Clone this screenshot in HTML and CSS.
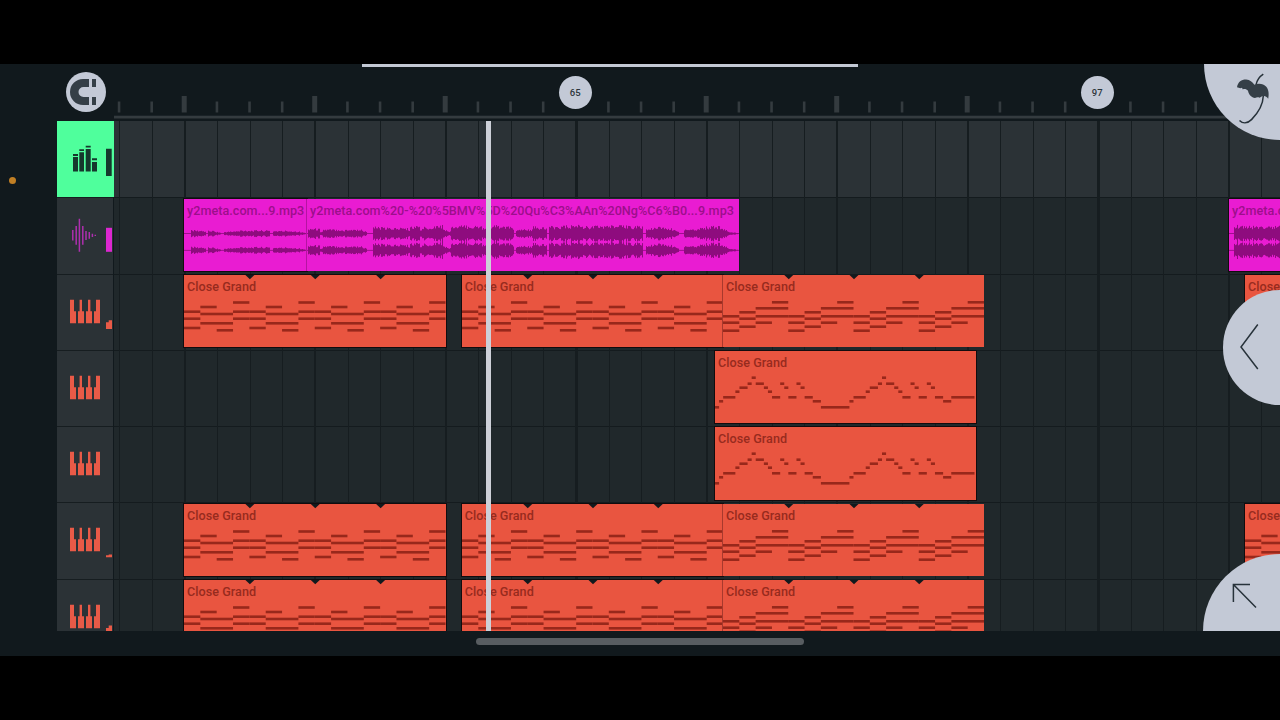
FILE: index.html
```html
<!DOCTYPE html>
<html lang="en">
<head>
    <meta charset="UTF-8">
    <meta name="viewport" content="width=device-width, initial-scale=1.0">
    <title>Playlist</title>
    <link rel="stylesheet" href="styles.css">
</head>
<body>
    <!-- Shared icons -->
    <svg class="defs" width="0" height="0">
        <symbol id="piano" viewBox="0 0 30 24">
            <path d="M0 0H4V11.7H6V24H0ZM9.6 0H12V11.7H14V24H8V11.7H9.6ZM18 0H20.4V11.7H22V24H16V11.7H18ZM26 0H30V24H24V11.7H26Z"/>
        </symbol>
    </svg>

    <div class="app">
        <header class="toolbar">
            <div class="loop-bar"></div>
            <div class="magnet">
                <svg width="40" height="40" viewBox="0 0 40 40">
                    <path d="M23 7H17A13 13 0 0 0 17 33H23V25H17.5A5 5 0 0 1 17.5 15H23ZM26 7H30V15H26ZM26 25H30V33H26Z"/>
                </svg>
            </div>
            <div class="ruler">
                <svg id="ticks" width="1166" height="57"></svg>
                <span class="marker marker-65">65</span>
                <span class="marker marker-97">97</span>
            </div>
        </header>

        <main class="playlist">
            <aside class="gutter"><span class="dot"></span></aside>

            <!-- Track headers -->
            <div class="tracks">
                <div class="track master">
                    <svg width="57" height="76">
                        <path d="M16 36H21V50.5H16ZM16 33H21V35H16ZM22.3 31.3H27V50.5H22.3ZM22.3 28.3H27V30H22.3ZM28.7 28H33.7V50.5H28.7ZM28.7 24.8H33.7V26.6H28.7ZM35 41H40V50.5H35ZM35 37.3H40V39.2H35ZM49 27.8H54.7V55H49Z"/>
                    </svg>
                </div>
                <div class="track audio">
                    <svg width="57" height="76">
                        <path class="wave-icon" d="M15.8 33V43.5M19.2 29V47.8M22.4 21.8V54.8M25.8 29V47.8M29 34V43M32.3 35V41.8M35.4 36.7V40M38.3 37.7V39"/>
                        <rect class="meter" x="49" y="30.8" width="6" height="24"/>
                    </svg>
                </div>
                <div class="track keys">
                    <svg width="57" height="76">
                        <use href="#piano" x="13" y="25.5" width="30" height="24"/>
                        <path class="meter" d="M49 48.3H51.7V46.2H55V55H49Z"/>
                    </svg>
                </div>
                <div class="track keys">
                    <svg width="57" height="76"><use href="#piano" x="13" y="25.5" width="30" height="24"/></svg>
                </div>
                <div class="track keys">
                    <svg width="57" height="76"><use href="#piano" x="13" y="25.5" width="30" height="24"/></svg>
                </div>
                <div class="track keys">
                    <svg width="57" height="76">
                        <use href="#piano" x="13" y="25.5" width="30" height="24"/>
                        <path class="meter" d="M49 53.2H51.7V52.4H55V55.2H49Z"/>
                    </svg>
                </div>
                <div class="track keys">
                    <svg width="57" height="76">
                        <use href="#piano" x="13" y="25.5" width="30" height="24"/>
                        <path class="meter" d="M49 49H51.7V46.5H55V55.2H49Z"/>
                    </svg>
                </div>
            </div>

            <!-- Lanes are filled by script.js -->
            <div class="timeline" id="timeline">
                <svg id="grid" class="grid" width="1166" height="510"></svg>
                <div class="playhead"></div>
            </div>
        </main>

        <footer class="scroll"><div class="thumb"></div></footer>

        <!-- Corner buttons -->
        <div class="corner menu">
            <svg width="76" height="76">
                <path class="stem" d="M59.3 10.2C55 13 52.8 16.5 52 21M59.3 32C59 40 54 49 47.5 55.6C43 60 38.5 59.5 35.5 56.5"/>
                <path class="palm" d="M33 23.3C34 17.5 38 15.4 42.2 15.6C46 15.8 48.3 18.3 50.4 20.8C54.5 18.8 59.5 19.6 62.3 22.8C65 26 65 31 64.2 34.8C62.8 32.8 61.2 31.8 59.6 32C58 31.6 56.8 33 55.6 33.8C54 33 52.6 33.2 51 34C47.6 33.6 44.8 31 44 26.8C42.6 25.2 40.6 24.6 38.8 25.4L38 23.8L36.4 24.2Z"/>
            </svg>
        </div>
        <div class="corner back">
            <svg width="58" height="115"><path d="M34.8 34.5L18 57L34.8 79"/></svg>
        </div>
        <div class="corner expand">
            <svg width="77" height="77"><path d="M47 30.5H30.4V48M30.4 30.5L53 53.5"/></svg>
        </div>
    </div>

    <script src="script.js"></script>
</body>
</html>
```
FILE: styles.css
```css
body {
    margin: 0;
    background-color: #000;
    font-family: Roboto, sans-serif;
    overflow: hidden;
}
.defs {
    position: absolute;
}
svg {
    display: block;
}
.app {
    position: relative;
    display: flex;
    flex-direction: column;
    width: 1280px;
    height: 592px;
    margin: 64px 0;
    background-color: #11191d;
    overflow: hidden;
}

/* Toolbar */
.toolbar {
    position: relative;
    display: flex;
    height: 57px;
}
.loop-bar {
    position: absolute;
    left: 362px;
    top: 0;
    width: 496px;
    height: 2.5px;
    background-color: #c3c9d4;
}
.magnet {
    width: 40px;
    height: 40px;
    margin: 8px 8.5px 0 65.5px;
    border-radius: 50%;
    background-color: #c3c9d6;
    fill: #353f47;
}
.ruler {
    position: relative;
    flex: 1;
}
#ticks {
    fill: #343b3f;
}
.marker {
    position: absolute;
    top: 11.5px;
    width: 33.5px;
    height: 33.5px;
    border-radius: 50%;
    background-color: #c3c9d6;
    color: #2b343a;
    font-size: 9.5px;
    font-weight: 500;
    line-height: 33px;
    text-align: center;
}
.marker-65 {
    left: 444.5px;
}
.marker-97 {
    left: 966.5px;
}

/* Playlist */
.playlist {
    display: flex;
    height: 510px;
    overflow: hidden;
}
.gutter {
    width: 57px;
}
.dot {
    display: block;
    width: 7px;
    height: 7px;
    margin: 56px 0 0 9px;
    border-radius: 50%;
    background-color: #c17f24;
}
.tracks {
    width: 57px;
}
.track {
    box-sizing: border-box;
    width: 56px;
    height: 76.25px;
    background-color: #2b3236;
    border-top: 1px solid #161d20;
    overflow: hidden;
}
.track svg {
    margin-top: -1px;
}
.master {
    width: 56.5px;
    border-top: none;
    background-color: #4fff9c;
    fill: #16382d;
}
.master svg {
    margin-top: 0;
}
.audio {
    fill: #dc27d0;
}
.wave-icon {
    fill: none;
    stroke: #ae2fae;
    stroke-width: 1.5;
}
.keys {
    fill: #e95a47;
}
.timeline {
    position: relative;
    flex: 1;
    overflow: hidden;
}
.lane {
    position: relative;
    box-sizing: border-box;
    height: 76.25px;
    border-top: 1px solid #141b1e;
    background-color: #20282b;
}
.lane:first-of-type {
    border-top: none;
    background-color: #2b3236;
}
.grid {
    position: absolute;
    left: 0;
    top: 0;
    fill: #161d20;
}
.clip {
    position: absolute;
    top: 0.4px;
    height: 72.25px;
    overflow: hidden;
    box-shadow: 0 0 0 1px #120c0e;
    z-index: 1;
}
.clip svg {
    position: absolute;
    left: 0;
    top: 0;
}
.clip.joined {
    box-shadow: -1px 0 0 #a8392d;
}
.clip-name {
    position: relative;
    display: block;
    padding: 4px 0 0 3px;
    font-size: 12.6px;
    line-height: 16px;
    font-weight: 500;
    letter-spacing: 0.04px;
    white-space: nowrap;
}
.clip.midi {
    background-color: #e95540;
    color: #972b1e;
    fill: #98281b;
}
.clip.wave {
    background-color: #e91cd2;
    color: #9c0f8b;
    fill: #8e0c7e;
}
.clip.wave.joined {
    box-shadow: -1px 0 0 #b514a2;
}
.notch {
    fill: #11191d;
}
.playhead {
    position: absolute;
    left: 372px;
    top: 0;
    width: 5px;
    height: 510px;
    background-color: #cdd0d8;
    z-index: 2;
}

/* Bottom scrollbar */
.scroll {
    display: flex;
    justify-content: center;
    height: 25px;
}
.thumb {
    width: 328px;
    height: 7px;
    margin-top: 6.5px;
    border-radius: 4px;
    background-color: #585d61;
}

/* Corner buttons */
.corner {
    position: absolute;
    right: 0;
    z-index: 3;
    background-color: #c3c9d6;
}
.corner path {
    fill: none;
    stroke: #27323a;
    stroke-width: 1.5;
}
.menu {
    top: 0;
    width: 76px;
    height: 76px;
    border-bottom-left-radius: 76px;
}
.corner .palm {
    fill: #353f47;
    stroke: none;
}
.back {
    top: 225.5px;
    width: 57.5px;
    height: 115px;
    border-radius: 57.5px 0 0 57.5px;
}
.expand {
    top: 490px;
    width: 77px;
    height: 77px;
    border-top-left-radius: 77px;
}
```
FILE: script.js
```js
const STEP = 32.625;      // width of one grid cell
const ORIGIN = 114;       // left edge of the timeline
const CLIP_HEIGHT = 72;

// Repeating chord figure, [start, length, y] in units of 1/16 clip
const chordsA = [
    [0, 1, 53], [1, 1, 32], [2, 1, 55.3], [3, 1, 27.5],
    [0, 1, 36.7], [0, 1, 43.7], [1, 2, 39], [1, 2, 48.3],
    [3, 1, 36.7], [3, 1, 43.7]
];
const chordsB = [
    [0, 1, 41.3], [0, 1, 47.7], [0, 1, 55.7],
    [1, 1, 37.3], [1, 1, 43.7], [1, 1, 51.7],
    [2, 2, 33.3], [2, 2, 41.3], [2, 1, 47.7], [3, 1, 27.3]
];
// Melody, in units of 1/64 clip
const melody = [
    [0, 1, 56.3], [1, 1, 50.3], [2, 3, 46.3], [5, 1, 40.7], [6, 2, 36.7], [8, 1, 32.7],
    [9, 1, 26.7], [10, 2, 32.7], [12, 1, 36.7], [13, 1, 40.7], [14, 2, 46.3],
    [16, 1, 32.7], [17, 1, 36.7], [18, 2, 46.3], [20, 1, 32.7], [21, 1, 36.7],
    [22, 2, 46.3], [24, 2, 50.3], [26, 7, 56.3],
    [33, 1, 50.3], [34, 3, 46.3], [37, 1, 40.7], [38, 2, 36.7], [40, 1, 32.7],
    [41, 1, 26.7], [42, 2, 32.7], [44, 1, 36.7], [45, 1, 40.7], [46, 2, 46.3],
    [48, 1, 32.7], [49, 1, 36.7], [50, 2, 46.3], [52, 1, 32.7], [53, 1, 36.7],
    [54, 2, 46.3], [56, 2, 50.3], [58, 5.7, 46.3]
];

// Loudness of the audio, [from, to, level at from, level at to]
const levels = [
    [191, 206, 3.6, 2.4], [208, 214, 2.8, 2.8], [214, 221, 2.4, 0.8],
    [224, 240, 1.8, 2.6], [240, 256, 3.4, 3], [256, 270, 3.4, 3],
    [273, 285, 2.8, 2.6], [285, 300, 3, 2], [300, 306, 1.6, 0.6],
    [308, 320, 5.6, 4.6], [320, 323, 2, 3], [323, 343, 4.2, 4.2], [343, 345, 2.4, 2.8],
    [345, 362, 4.4, 4], [362, 367, 3.4, 1.6],
    [373, 386, 7, 5.6], [386, 408, 5.6, 5.8], [408, 410, 3, 3], [410, 420, 7, 7.6],
    [420, 422, 4, 4], [422, 435, 6.2, 7.6], [435, 443, 8.6, 8], [443, 447, 6, 2.5], [447, 451, 2.4, 2.4],
    [451, 456, 7, 7.6], [456, 462, 6.5, 8], [462, 482, 8, 7.4], [482, 500, 6.5, 8.4],
    [500, 514, 7.6, 6], [516, 526, 3, 5], [526, 533, 4, 4], [533, 547, 7, 5.4],
    [549, 575, 7, 8.2], [575, 583, 8.6, 8.6], [583, 610, 7.2, 8.2], [610, 643, 8, 7.4],
    [646, 658, 4.6, 6], [658, 672, 6.6, 5], [672, 679, 4.4, 1.4],
    [684, 694, 4.8, 4.4], [694, 706, 4.6, 6.4], [706, 720, 7, 7.6],
    [720, 728, 6.4, 2.4], [728, 739, 1.8, 0.4],
    [1234, 1260, 8.2, 7], [1260, 1280, 7, 8]
];

const chordClip = { pattern: chordsA, units: 16, repeat: 4, notches: true };
const chordClipB = { pattern: chordsB, units: 16, repeat: 4, notches: true };
const melodyClip = { pattern: melody, units: 64, repeat: 64 };

const chordLane = [
    { x: 184, w: 261.5, ...chordClip },
    { x: 461.7, w: 261, ...chordClip },
    { x: 723, w: 261, joined: true, ...chordClipB },
    { x: 1245, w: 261, ...chordClip }
];
const lanes = [
    [],
    [
        { x: 184, w: 122.5, audio: true, name: 'y2meta.com...9.mp3' },
        { x: 307, w: 432, audio: true, joined: true, name: 'y2meta.com%20-%20%5BMV%5D%20Qu%C3%AAn%20Ng%C6%B0...9.mp3' },
        { x: 1229, w: 262, audio: true, name: 'y2meta.com%20-%20%5BMV%5D' }
    ],
    chordLane,
    [{ x: 715, w: 260.7, ...melodyClip }],
    [{ x: 715, w: 260.7, ...melodyClip }],
    chordLane,
    chordLane
];

function rect(x, y, w, h) {
    return `<rect x="${x.toFixed(2)}" y="${y.toFixed(2)}" width="${w.toFixed(2)}" height="${h}"/>`;
}

function drawNotes(clip) {
    const unit = clip.w / clip.units;
    let out = '';
    for (let start = 0; start < clip.units; start += clip.repeat) {
        clip.pattern.forEach(([from, length, y]) => {
            out += rect((start + from) * unit, y - 1.3, length * unit, 2.6);
        });
    }
    if (clip.notches) {
        for (let i = 1; i < 4; i++) {
            const x = i * clip.w / 4 + 0.5;
            out += `<path class="notch" d="M${x - 4.5} 0H${x + 4.5}L${x} 4.2Z"/>`;
        }
    }
    return out;
}

function levelAt(x) {
    const part = levels.find(([from, to]) => x >= from && x < to);
    if (!part) {
        return 0.4;
    }
    const [from, to, a, b] = part;
    const noise = Math.abs(Math.sin(x * 12.9898) * 43758.5453) % 1;
    return (a + (b - a) * (x - from) / (to - from)) * (0.58 + noise * 0.5);
}

function drawWave(clip) {
    let out = '';
    for (let x = 0; x < clip.w; x++) {
        const level = levelAt(Math.floor(clip.x) + x);
        out += rect(x, 34.6 - level, 1, (level * 2).toFixed(2));
        out += rect(x, 51.3 - level, 1, (level * 2).toFixed(2));
    }
    return out;
}

const timeline = document.getElementById('timeline');
const grid = document.getElementById('grid');

lanes.forEach(clips => {
    const lane = document.createElement('div');
    lane.className = 'lane';
    clips.forEach(clip => {
        const el = document.createElement('div');
        el.className = 'clip ' + (clip.audio ? 'wave' : 'midi') + (clip.joined ? ' joined' : '');
        el.style.left = (clip.x - ORIGIN) + 'px';
        el.style.width = clip.w + 'px';
        el.innerHTML = `
            <svg width="${clip.w}" height="${CLIP_HEIGHT}">${clip.audio ? drawWave(clip) : drawNotes(clip)}</svg>
            <span class="clip-name">${clip.name || 'Close Grand'}</span>
        `;
        lane.appendChild(el);
    });
    timeline.insertBefore(lane, grid);
});

// Grid lines and ruler ticks
let lines = '';
let ticks = rect(0, 51.7, 1166, 2.8);
for (let i = 0; i < 36; i++) {
    const x = 4.75 + i * STEP;
    const major = i % 4 === 2;
    const section = i % 16 === 14;
    const width = section ? 3 : major ? 2 : 1;
    lines += rect(Math.floor(x + 0.9 - (width - 1) / 2), 0, width, 510);
    if (!section) {
        ticks += major ? rect(x - 2.3, 32, 5, 16.5) : rect(x - 1, 37.5, 2.6, 11);
    }
}
grid.innerHTML = lines;
document.getElementById('ticks').innerHTML = ticks;
```
